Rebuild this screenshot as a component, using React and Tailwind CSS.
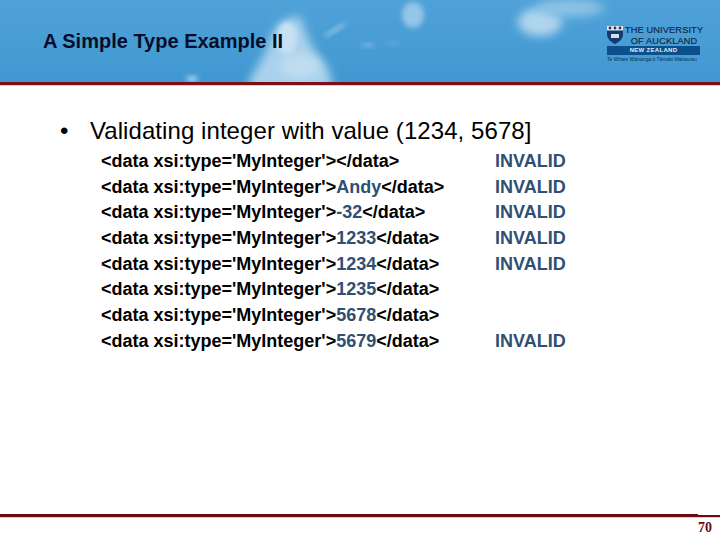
const rows = [
  ['', 'INVALID'],
  ['Andy', 'INVALID'],
  ['-32', 'INVALID'],
  ['1233', 'INVALID'],
  ['1234', 'INVALID'],
  ['1235', ''],
  ['5678', ''],
  ['5679', 'INVALID'],
];

function Sky() {
  return (
    <svg className="absolute inset-0 w-full h-full" viewBox="0 0 720 82" preserveAspectRatio="none">
      <defs>
        <linearGradient id="sky" x1="0" y1="0" x2="0" y2="1">
          <stop offset="0" stopColor="#4fa2d8" />
          <stop offset="1" stopColor="#4198d1" />
        </linearGradient>
        <filter id="b1" x="-50%" y="-50%" width="200%" height="200%"><feGaussianBlur stdDeviation="5" /></filter>
        <filter id="b2" x="-50%" y="-50%" width="200%" height="200%"><feGaussianBlur stdDeviation="2.5" /></filter>
      </defs>
      <rect width="720" height="82" fill="url(#sky)" />
      <path d="M246 92 C250 74 262 62 268 46 C272 30 280 18 300 16 C306 34 312 50 322 60 C330 68 332 78 332 92 Z" fill="#a9d1ec" filter="url(#b1)" />
      <ellipse cx="287" cy="38" rx="10" ry="16" fill="#c8e1f2" filter="url(#b2)" />
      <ellipse cx="300" cy="66" rx="20" ry="12" fill="#c0ddf0" filter="url(#b1)" />
      <ellipse cx="335" cy="30" rx="13" ry="2" fill="#8fc3e4" filter="url(#b2)" transform="rotate(-32 335 30)" />
      <ellipse cx="192" cy="79" rx="6" ry="3" fill="#a9d0ea" filter="url(#b2)" />
      <ellipse cx="413" cy="15" rx="11" ry="13" fill="#93c6e7" filter="url(#b2)" />
      <ellipse cx="540" cy="22" rx="22" ry="14" fill="#b0d5ee" filter="url(#b1)" />
      <ellipse cx="570" cy="8" rx="34" ry="9" fill="#8cc2e5" filter="url(#b1)" />
      <ellipse cx="368" cy="45" rx="7" ry="2" fill="#7ab6df" filter="url(#b2)" />
      <ellipse cx="393" cy="43" rx="7" ry="2" fill="#62a9da" filter="url(#b2)" />
    </svg>
  );
}

function Logo() {
  return (
    <div className="relative flex flex-col w-[93px] text-[#13294b] leading-none">
      <div className="flex items-start gap-[2px]">
        <svg width="16" height="19" viewBox="0 0 16 19" className="shrink-0">
          <path d="M0 0H16V9C16 14 12 17 8 19C4 17 0 14 0 9Z" fill="#123a6b" />
          <rect x="0" y="0.5" width="16" height="5" fill="#dfe8ee" />
          <circle cx="3" cy="3" r="1.4" fill="#1c3a5e" />
          <circle cx="8" cy="3" r="1.4" fill="#1c3a5e" />
          <circle cx="13" cy="3" r="1.4" fill="#1c3a5e" />
          <rect x="4" y="9" width="8" height="4" fill="#d5dfe8" />
        </svg>
        <div className="flex flex-col items-center whitespace-nowrap text-[9.2px] leading-[10.5px] tracking-[0.15px] [-webkit-text-stroke:0.2px_#13294b]">
          <span>THE UNIVERSITY</span>
          <span>OF AUCKLAND</span>
        </div>
      </div>
      <div className="h-[9px] bg-[#0b4f8c] text-[#e6eef5] text-[6px] leading-[9px] font-bold text-center tracking-[0.3px]">NEW ZEALAND</div>
      <div className="mt-[1px] text-[5px] leading-[7px] whitespace-nowrap text-[#102f55]">Te Whare Wānanga o Tāmaki Makaurau</div>
    </div>
  );
}

export default function App() {
  return (
    <div className="w-[720px] h-[540px] bg-white flex flex-col overflow-hidden font-['Liberation_Sans',sans-serif]">
      <header className="relative h-[82px] shrink-0">
        <Sky />
        <div className="relative h-full flex items-start justify-between pl-[43px] pr-[20px]">
          <h1 className="mt-[28px] text-[20px] leading-[26px] font-bold text-[#050d2b]">A Simple Type Example II</h1>
          <div className="mt-[25px]"><Logo /></div>
        </div>
      </header>
      <div className="h-[3px] shrink-0 bg-[#7d0f17]" />
      <div className="h-[1px] shrink-0 bg-[#e8c9cc]" />

      <main className="flex-1 pt-[30px] text-black">
        <div className="flex items-center pl-[60px] text-[24px] leading-[30px] tracking-[0.07px]">
          <span className="w-[30px]">•</span>
          <span>Validating integer with value (1234, 5678]</span>
        </div>
        <div className="mt-[3px] pl-[101px] text-[18px] font-bold">
          {rows.map(([val, status], i) => (
            <div key={i} className="flex h-[25.7px] leading-[25.7px]">
              <div className="w-[394px] whitespace-nowrap">
                {"<data xsi:type='MyInteger'>"}
                <span className="text-[#2f4f73]">{val}</span>
                {'</data>'}
              </div>
              <div className="text-[#2f4f73]">{status}</div>
            </div>
          ))}
        </div>
      </main>

      <footer className="shrink-0 h-[26px] flex flex-col">
        <div className="flex h-[3px]">
          <div className="w-[698px] bg-[#6b0a12]" />
          <div className="flex-1 mt-[1px] h-[2px] bg-[#6b0a12]" />
        </div>
        <div className="h-[1px] bg-[#e8c9cc]" />
        <div className="flex justify-end pr-[8px] text-[14px] leading-[20px] font-bold text-[#6b0a12] font-['Liberation_Serif',serif]">70</div>
      </footer>
    </div>
  );
}
